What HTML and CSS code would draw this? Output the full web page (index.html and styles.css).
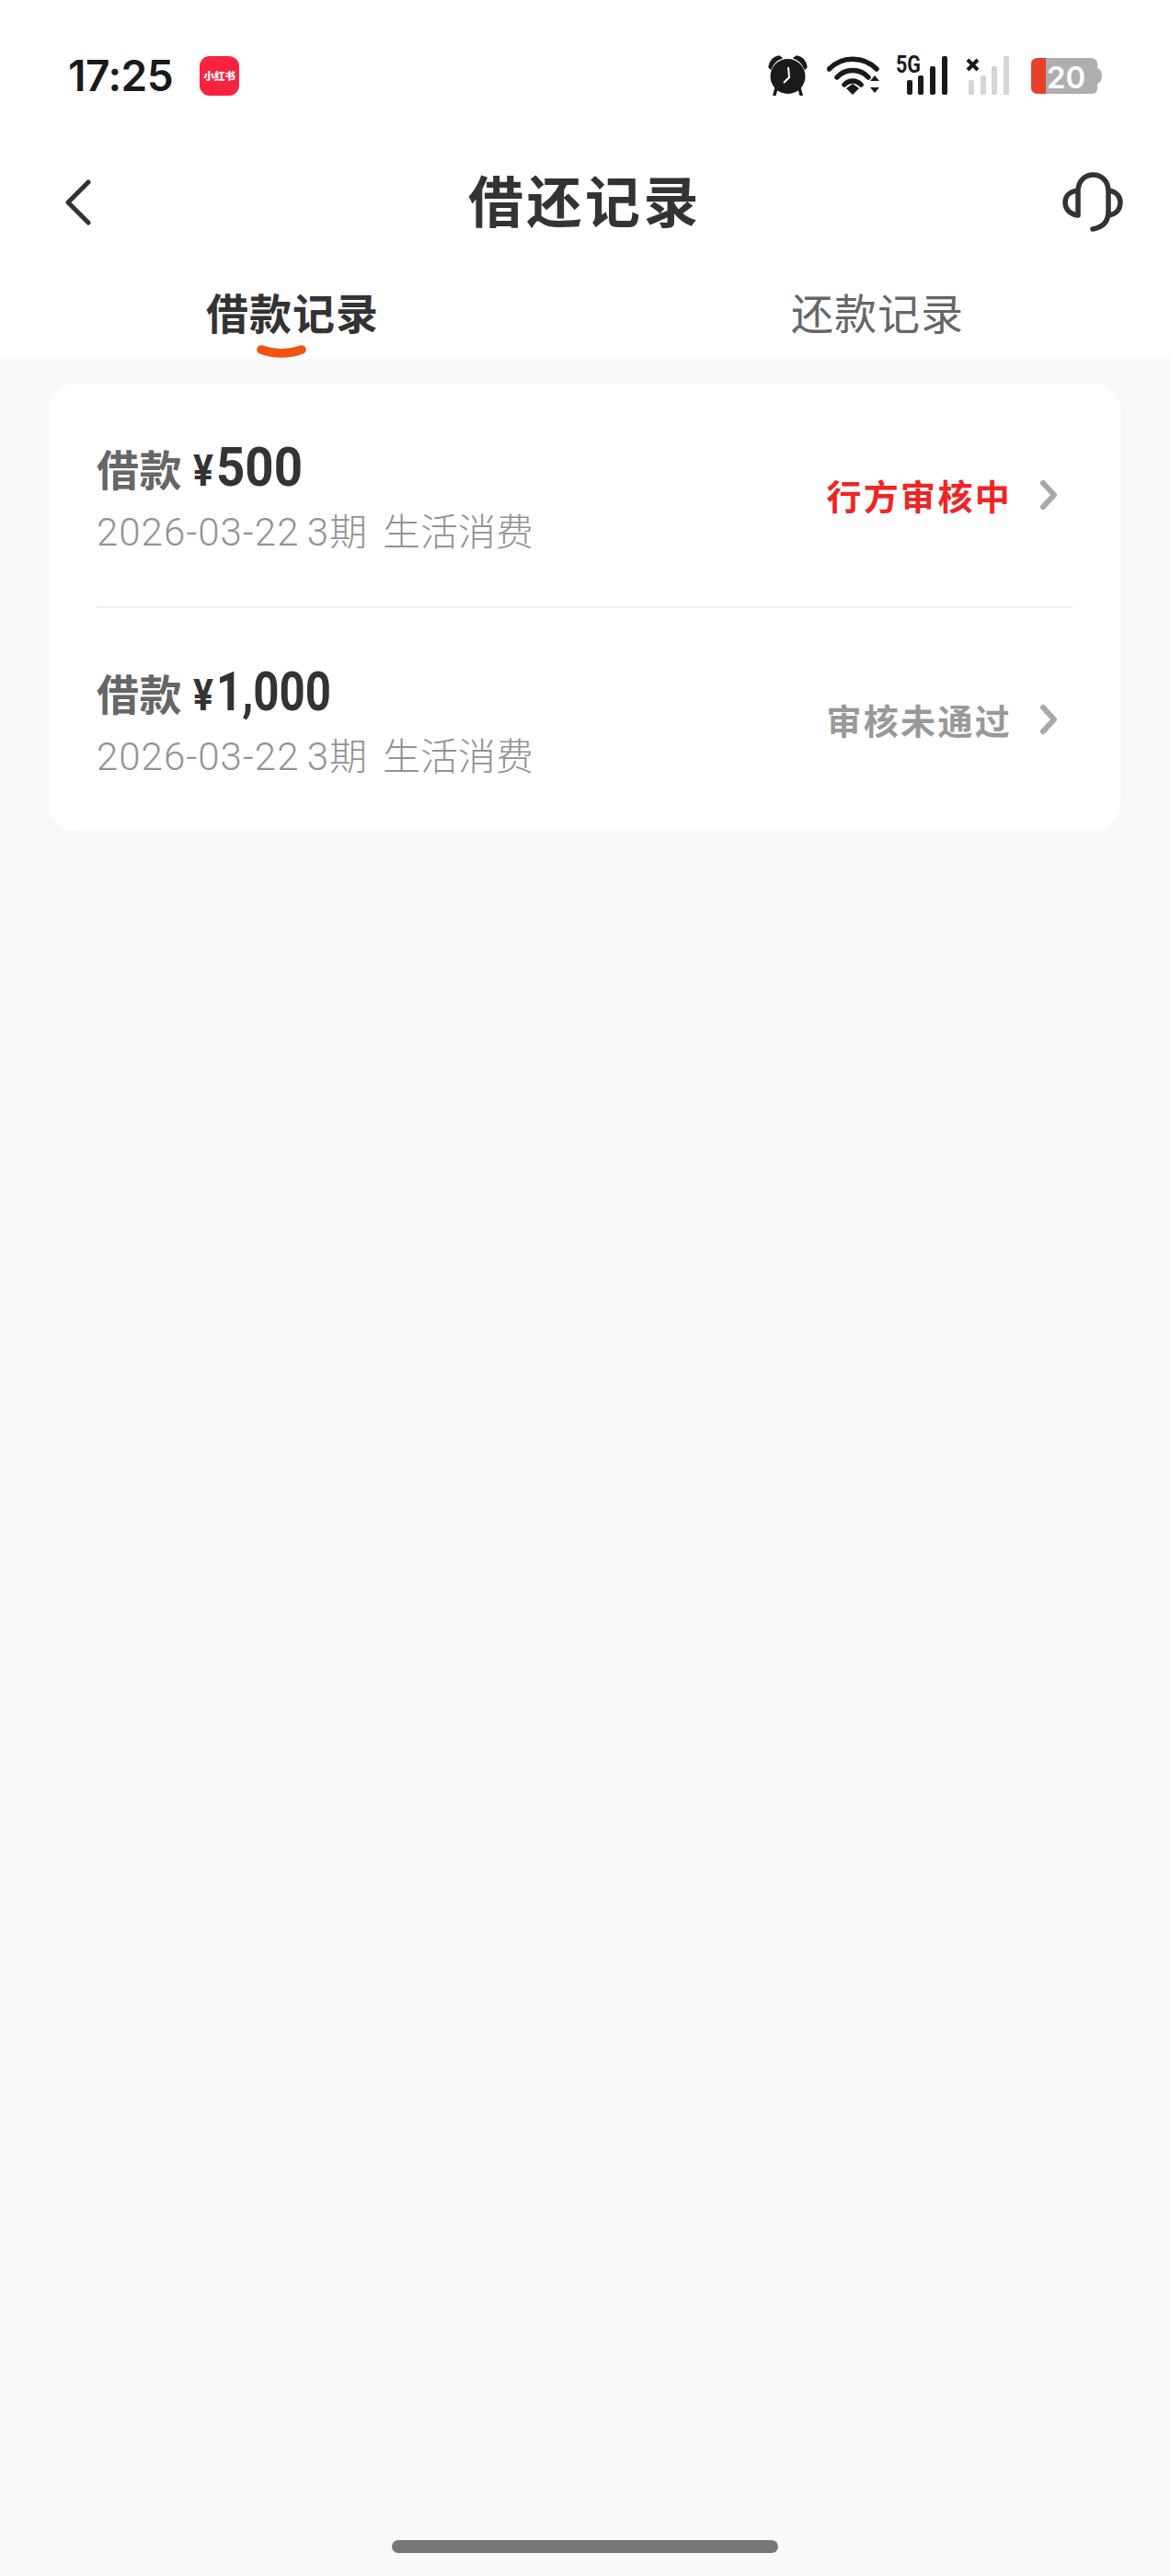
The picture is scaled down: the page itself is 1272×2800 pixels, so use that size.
FILE: index.html
```html
<!DOCTYPE html>
<html lang="zh">
<head>
<meta charset="utf-8">
<title>借还记录</title>
<link rel="stylesheet" href="styles.css">
</head>
<body>
<div class="page">
  <header class="top">
    <div class="status">
      <div class="status-left">
        <span class="time">17:25</span>
        <span class="app-badge"><span class="app-badge-text">小红书</span></span>
      </div>
      <div class="status-right">
        <svg class="ic-alarm" width="43" height="44" viewBox="0 0 43 44">
          <path d="M1 13 C2 6 6 2 12 1 L15 3 C9 5 5 9 3 15 Z M42 13 C41 6 37 2 31 1 L28 3 C34 5 38 9 40 15 Z" fill="#1a1a1a" stroke="#1a1a1a" stroke-width="1.500" stroke-linejoin="round"/>
          <circle cx="21.500" cy="23" r="19" fill="#1a1a1a"/>
          <path d="M9 36 L7 43 M34 36 L36 43" stroke="#1a1a1a" stroke-width="3.500" stroke-linecap="round"/>
          <path d="M22 13 L23 24 L17 30" fill="none" stroke="#fff" stroke-width="2"/>
        </svg>
        <svg class="ic-wifi" width="58" height="42" viewBox="0 0 58 42">
          <path d="M2.500 14 C16 -0.500 40 -0.500 54 14" fill="none" stroke="#1a1a1a" stroke-width="5.500" stroke-linecap="round"/>
          <path d="M11 23 C20 13 36 13 45 23" fill="none" stroke="#1a1a1a" stroke-width="5.500" stroke-linecap="round"/>
          <path d="M19 31 C24 25.500 32 25.500 37 31" fill="none" stroke="#1a1a1a" stroke-width="5.500" stroke-linecap="round"/>
          <path d="M21 35 L28 30 L35 35 L28 42 Z" fill="#1a1a1a"/>
          <path d="M47 27 L52 21 L57 27 Z M47 34 L57 34 L52 40 Z" fill="#1a1a1a"/>
        </svg>
        <svg class="ic-5g" width="56" height="42" viewBox="0 0 56 42">
          <text class="svg-5g" x="0" y="18" textLength="27" lengthAdjust="spacingAndGlyphs">5G</text>
          <rect x="12" y="26" width="6" height="16" rx="2" fill="#1a1a1a"/>
          <rect x="24" y="21" width="6" height="21" rx="2" fill="#1a1a1a"/>
          <rect x="37" y="11" width="6" height="31" rx="2" fill="#1a1a1a"/>
          <rect x="50" y="0" width="6" height="42" rx="2" fill="#1a1a1a"/>
        </svg>
        <svg class="ic-nosig" width="48" height="42" viewBox="0 0 48 42">
          <path d="M2 4 L13 15 M13 4 L2 15" stroke="#1a1a1a" stroke-width="4"/>
          <rect x="3" y="26" width="6" height="16" rx="1.500" fill="#d6d6d6"/>
          <rect x="16" y="21" width="6" height="21" rx="1.500" fill="#d6d6d6"/>
          <rect x="28" y="11" width="6" height="31" rx="1.500" fill="#d6d6d6"/>
          <rect x="41" y="0" width="6" height="42" rx="1.500" fill="#d6d6d6"/>
        </svg>
        <svg class="ic-batt" width="77" height="40" viewBox="0 0 77 40">
          <path d="M8 0 H65 Q72 0 72 7 V33 Q72 39 65 39 H8 Q0 39 0 32 V7 Q0 0 8 0 Z" fill="#aeaeae"/>
          <path d="M8 0 H16 V39 H8 Q0 39 0 32 V7 Q0 0 8 0 Z" fill="#e8402c"/>
          <path d="M72 11 Q77 13 77 19 Q77 26 72 28 Z" fill="#aeaeae"/>
          <text class="svg-batt" x="17" y="33">20</text>
        </svg>
      </div>
    </div>
    <nav class="navbar">
      <svg class="nav-back" width="30" height="50" viewBox="0 0 30 50">
        <path d="M26 3 L4 25 L26 47" fill="none" stroke="#333" stroke-width="5" stroke-linecap="round" stroke-linejoin="round"/>
      </svg>
      <h1 class="nav-title">借还记录</h1>
      <svg class="nav-help" width="66" height="66" viewBox="0 0 66 66">
        <path d="M17 47 V21 C17 -3 50 -3 50 21 V43 C50 54 44 60 33 62" fill="none" stroke="#333" stroke-width="5.500" stroke-linecap="round"/>
        <path d="M17 20 C7 21 3 27 3 33 C3 40 8 46 17 47" fill="none" stroke="#333" stroke-width="5.500"/>
        <path d="M50 20 C59 21 63 27 63 33 C63 40 59 46 50 47" fill="none" stroke="#333" stroke-width="5.500"/>
      </svg>
    </nav>
    <div class="tabs">
      <div class="tab tab-active">
        <span>借款记录</span>
        <svg class="tab-mark" width="54" height="14" viewBox="0 0 54 14">
          <path d="M5 5 Q27 13 49 5" fill="none" stroke="#f4520f" stroke-width="9.500" stroke-linecap="round"/>
        </svg>
      </div>
      <div class="tab">还款记录</div>
    </div>
  </header>
  <main class="content">
    <section class="card">
      <article class="row">
        <div class="row-main">
          <div class="row-amount"><span class="amt-label">借款</span><span class="amt-yen">¥</span><span class="amt-num">500</span></div>
          <div class="row-sub"><span class="sub-date">2026-03-22 3</span>期<span class="sub-use">生活消费</span></div>
        </div>
        <div class="row-status status-red">行方审核中</div>
        <svg class="chev" width="22" height="38" viewBox="0 0 22 38"><path d="M4 6 L16 19 L4 32" fill="none" stroke="#a8a8a8" stroke-width="6" stroke-linecap="round" stroke-linejoin="round"/></svg>
      </article>
      <article class="row row-last">
        <div class="row-main">
          <div class="row-amount"><span class="amt-label">借款</span><span class="amt-yen">¥</span><span class="amt-num amt-num-wide">1,000</span></div>
          <div class="row-sub"><span class="sub-date">2026-03-22 3</span>期<span class="sub-use">生活消费</span></div>
        </div>
        <div class="row-status status-gray">审核未通过</div>
        <svg class="chev" width="22" height="38" viewBox="0 0 22 38"><path d="M4 6 L16 19 L4 32" fill="none" stroke="#a8a8a8" stroke-width="6" stroke-linecap="round" stroke-linejoin="round"/></svg>
      </article>
    </section>
    <div class="home-bar"></div>
  </main>
</div>
</body>
</html>
```
FILE: styles.css
```css
* { box-sizing: border-box; }
html, body { margin: 0; padding: 0; }
body {
  width: 1272px;
  height: 2800px;
  overflow: hidden;
  background: #f9f9f9;
  font-family: "Noto Sans CJK SC", "Noto Sans", sans-serif;
}
.page { display: flex; flex-direction: column; height: 2800px; }
.top { background: #fff; height: 390px; flex: none; }

.status {
  height: 165px;
  padding: 60px 74px 0 74px;
  display: flex;
  justify-content: space-between;
  align-items: flex-start;
}
.status-left { display: flex; align-items: center; gap: 29px; height: 44px; }
.time {
  font-family: Inter, sans-serif;
  font-weight: 600;
  font-size: 46px;
  line-height: 44px;
  color: #1a1a1a;
  letter-spacing: -0.5px;
}
.app-badge {
  width: 43px;
  height: 43px;
  border-radius: 11px;
  background: #f8243f;
  display: flex;
  align-items: center;
  justify-content: center;
}
.app-badge-text {
  color: #fff;
  font-size: 11.500px;
  font-weight: 900;
  line-height: 14px;
  white-space: nowrap;
}
.status-right { display: flex; align-items: flex-start; }
.svg-5g { font-family: Roboto, sans-serif; font-size: 25px; font-weight: 700; fill: #1a1a1a; }
.svg-batt { font-family: Inter, sans-serif; font-size: 33px; font-weight: 600; fill: #fff; }
.ic-wifi { margin-left: 21px; margin-top: 1px; }
.ic-5g { margin-left: 17px; margin-top: 1px; overflow: visible; }
.ic-nosig { margin-left: 20px; margin-top: 1px; }
.ic-batt { margin-left: 23px; margin-top: 3px; }

.navbar {
  height: 110px;
  padding: 0 51px;
  display: grid;
  grid-template-columns: 1fr auto 1fr;
  align-items: center;
}
.nav-back { margin-left: 19px; }
.nav-title {
  margin: 0;
  padding-bottom: 8px;
  font-size: 60px;
  line-height: 70px;
  font-weight: 700;
  letter-spacing: 3.500px;
  color: #333;
}
.nav-help { justify-self: end; }

.tabs { display: grid; grid-template-columns: 1fr 1fr; height: 115px; }
.tab {
  text-align: center;
  padding-top: 31px;
  font-size: 46px;
  line-height: 64px;
  letter-spacing: 1px;
  color: #666;
  position: relative;
}
.tab-active { color: #333; font-weight: 700; }
.tab-mark { position: absolute; left: 279px; top: 100px; }

.content { flex: 1; position: relative; padding: 27px 54px 0; }
.card { background: #fff; border-radius: 28px; padding: 0 51px; }
.row {
  height: 244px;
  display: flex;
  align-items: center;
  border-bottom: 2px solid #f0f0f0;
}
.row-last { border-bottom: 0; height: 242px; }
.row-main { flex: 1; }
.row-amount { display: flex; align-items: baseline; height: 70px; margin-bottom: 8px; color: #333; }
.amt-label { font-size: 46px; font-weight: 700; color: #666; line-height: 70px; letter-spacing: 0.500px; }
.amt-yen { width: 25px; margin-left: 12px; font-family: Roboto, sans-serif; font-weight: 700; font-size: 48px; color: #333; transform: scaleX(0.85); transform-origin: left center; }
.amt-num { font-family: Roboto, sans-serif; font-weight: 700; font-size: 60px; color: #333; transform: scaleX(0.91); transform-origin: left center; }
.amt-num-wide { transform: scaleX(0.82); }
.row-sub { font-size: 41px; line-height: 50px; color: #939393; white-space: nowrap; font-weight: 300; }
.sub-date { font-family: Roboto, sans-serif; font-weight: 300; font-size: 42px; letter-spacing: 1px; word-spacing: -3px; }
.sub-use { margin-left: 17px; }
.row-status { font-size: 38px; font-weight: 700; letter-spacing: 2.300px; line-height: 50px; }
.status-red { color: #f02424; }
.status-gray { color: #999; }
.chev { margin-left: 30px; margin-right: 15px; flex: none; }

.home-bar {
  position: absolute;
  left: 426px;
  bottom: 25px;
  width: 420px;
  height: 14px;
  border-radius: 7px;
  background: #777;
}
```
